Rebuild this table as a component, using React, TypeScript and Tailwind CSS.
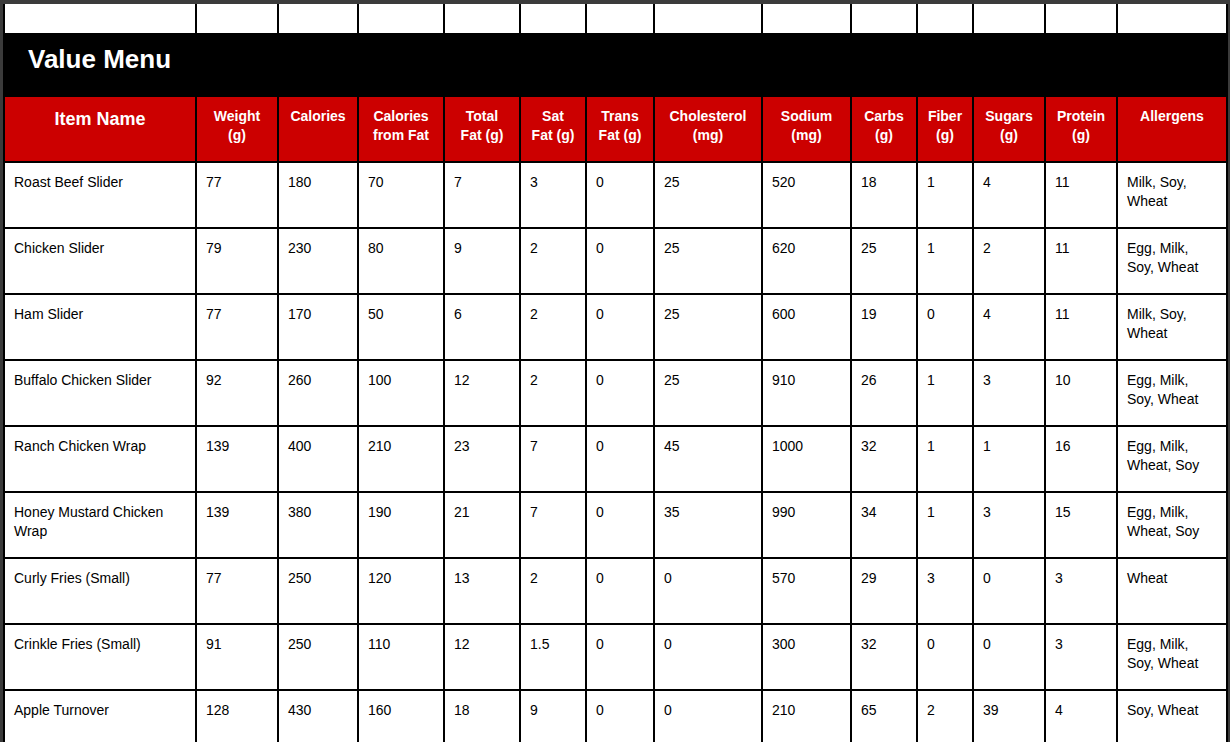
const headers: string[][] = [
  ["Weight", "(g)"],
  ["Calories"],
  ["Calories", "from Fat"],
  ["Total", "Fat (g)"],
  ["Sat", "Fat (g)"],
  ["Trans", "Fat (g)"],
  ["Cholesterol", "(mg)"],
  ["Sodium", "(mg)"],
  ["Carbs", "(g)"],
  ["Fiber", "(g)"],
  ["Sugars", "(g)"],
  ["Protein", "(g)"],
  ["Allergens"],
];

const rows: string[][] = [
  ["Roast Beef Slider", "77", "180", "70", "7", "3", "0", "25", "520", "18", "1", "4", "11", "Milk, Soy,\nWheat"],
  ["Chicken Slider", "79", "230", "80", "9", "2", "0", "25", "620", "25", "1", "2", "11", "Egg, Milk,\nSoy, Wheat"],
  ["Ham Slider", "77", "170", "50", "6", "2", "0", "25", "600", "19", "0", "4", "11", "Milk, Soy,\nWheat"],
  ["Buffalo Chicken Slider", "92", "260", "100", "12", "2", "0", "25", "910", "26", "1", "3", "10", "Egg, Milk,\nSoy, Wheat"],
  ["Ranch Chicken Wrap", "139", "400", "210", "23", "7", "0", "45", "1000", "32", "1", "1", "16", "Egg, Milk,\nWheat, Soy"],
  ["Honey Mustard Chicken\nWrap", "139", "380", "190", "21", "7", "0", "35", "990", "34", "1", "3", "15", "Egg, Milk,\nWheat, Soy"],
  ["Curly Fries (Small)", "77", "250", "120", "13", "2", "0", "0", "570", "29", "3", "0", "3", "Wheat"],
  ["Crinkle Fries (Small)", "91", "250", "110", "12", "1.5", "0", "0", "300", "32", "0", "0", "3", "Egg, Milk,\nSoy, Wheat"],
  ["Apple Turnover", "128", "430", "160", "18", "9", "0", "0", "210", "65", "2", "39", "4", "Soy, Wheat"],
];

export default function App() {
  return (
    <div className="h-[742px] overflow-hidden bg-[#3b3b3b] pt-1 pl-[3px] pr-[2px] font-['Liberation_Sans',Arial,sans-serif]">
      <div className="grid grid-cols-[190px_80px_78px_84px_74px_64px_66px_106px_87px_64px_54px_70px_70px_108px] gap-[2px] bg-black px-[2px]">
        {/* empty spacer row */}
        {Array.from({ length: 14 }).map((_, i) => (
          <div key={"e" + i} className="h-[29px] bg-white" />
        ))}

        <div className="col-span-14 h-[60px] bg-black pl-[23px] pt-[9px] text-[26px] leading-[30px] font-bold text-white">
          Value Menu
        </div>

        <div className="h-[64px] bg-[#cc0000] pt-[11px] text-center text-[18px] leading-[22px] font-bold text-white">
          Item Name
        </div>
        {headers.map((h, i) => (
          <div key={"h" + i} className="h-[64px] bg-[#cc0000] pt-[10px] text-center text-[14px] leading-[19px] font-bold text-white">
            {h.map((line, j) => (
              <div key={j}>{line}</div>
            ))}
          </div>
        ))}

        {rows.map((r, ri) =>
          r.map((cell, ci) => (
            <div
              key={ri + "-" + ci}
              className="h-[64px] whitespace-pre-line bg-white pl-[9px] pt-[10px] text-[14px] leading-[19px] text-black"
            >
              {cell}
            </div>
          ))
        )}
      </div>
    </div>
  );
}
